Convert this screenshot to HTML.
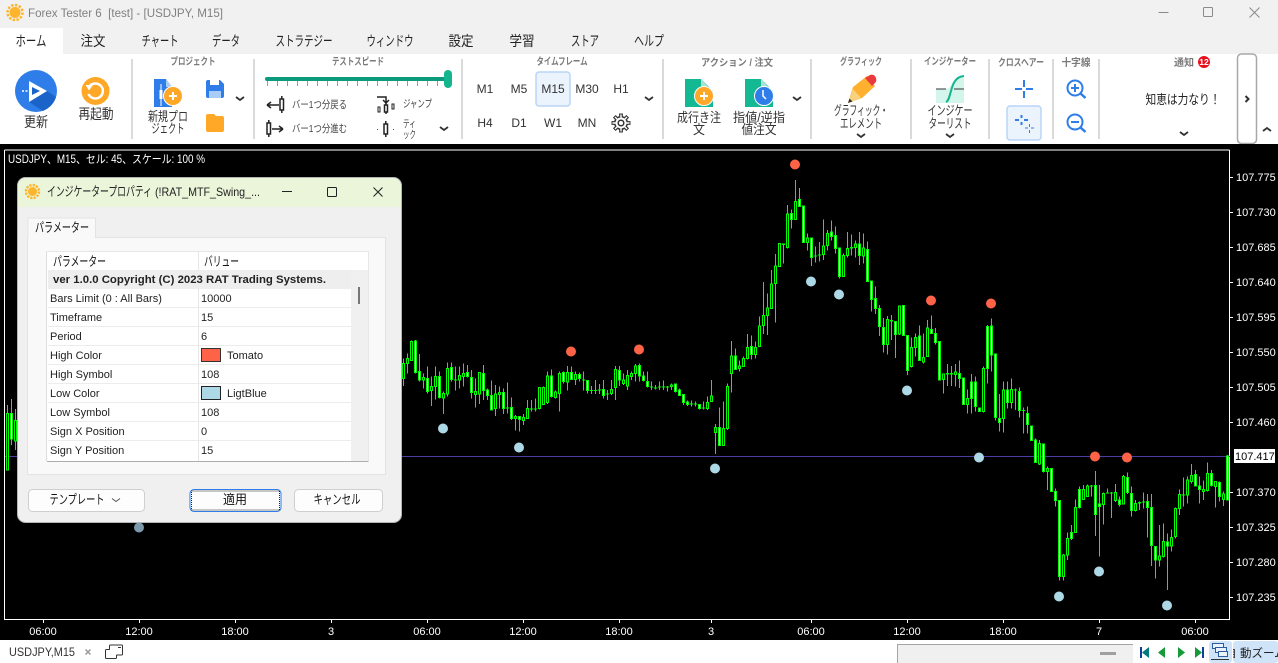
<!DOCTYPE html>
<html lang="ja"><head><meta charset="utf-8"><title>Forex Tester 6</title>
<style>
html,body{margin:0;padding:0;background:#fff;width:1278px;height:663px;overflow:hidden}
svg{display:block}
text{font-family:"Liberation Sans","Noto Sans CJK JP",sans-serif;font-size:12px;fill:#222}
.c{text-anchor:middle}
.tab{font-size:14px;text-anchor:middle;fill:#222}
.lbl{font-size:10px;text-anchor:middle;fill:#7a7a7a;font-weight:700}
.big{font-size:13px;text-anchor:middle;fill:#333}
.tf{font-size:12px;text-anchor:middle;fill:#333}
.sp{font-size:10.5px;fill:#444}
.px{font-size:11px;fill:#fff}
.tm{font-size:11px;fill:#fff;text-anchor:middle}
.r{font-size:11px;fill:#222}
.chev{fill:none;stroke:#333;stroke-width:1.8}
</style></head><body>
<svg width="1278" height="663" viewBox="0 0 1278 663" xmlns="http://www.w3.org/2000/svg">
<!-- title + tabs -->
<rect width="1278" height="54" fill="#f1f1f1"/>
<rect y="54" width="1278" height="90" fill="#fff"/>
<rect y="28" width="63" height="26" fill="#fff"/>
<g fill="#fdb52e"><circle cx="15" cy="12.500" r="5.500"/><circle cx="15" cy="12.500" r="7.500" fill="none" stroke="#fdb52e" stroke-width="2.500" stroke-dasharray="2.400 1.500"/></g>
<text x="28" y="17" style="font-size:12px;fill:#808080" xml:space="preserve" textLength="195" lengthAdjust="spacingAndGlyphs">Forex Tester 6  [test] - [USDJPY, M15]</text>
<path d="M1158.500 12.500h10" stroke="#8a8a8a" fill="none"/>
<rect x="1203.500" y="7.500" width="9" height="9" rx="1" fill="none" stroke="#8a8a8a"/>
<path d="M1249.500 7.500l10 10M1259.500 7.500l-10 10" stroke="#8a8a8a" fill="none"/>
<text class="tab" x="31" y="46" textLength="31" lengthAdjust="spacingAndGlyphs">ホーム</text><text class="tab" x="93" y="46" textLength="25" lengthAdjust="spacingAndGlyphs">注文</text><text class="tab" x="160" y="46" textLength="37" lengthAdjust="spacingAndGlyphs">チャート</text><text class="tab" x="226" y="46" textLength="28" lengthAdjust="spacingAndGlyphs">データ</text><text class="tab" x="304" y="46" textLength="57" lengthAdjust="spacingAndGlyphs">ストラテジー</text><text class="tab" x="390" y="46" textLength="47" lengthAdjust="spacingAndGlyphs">ウィンドウ</text><text class="tab" x="461" y="46" textLength="25" lengthAdjust="spacingAndGlyphs">設定</text><text class="tab" x="522" y="46" textLength="25" lengthAdjust="spacingAndGlyphs">学習</text><text class="tab" x="585" y="46" textLength="28" lengthAdjust="spacingAndGlyphs">ストア</text><text class="tab" x="649" y="46" textLength="30" lengthAdjust="spacingAndGlyphs">ヘルプ</text>
<!-- separators -->
<path d="M132 59v80M254 59v80M462 59v80M663 59v80M811 59v80M911 59v80M989 59v80M1053 59v80M1099 59v80" stroke="#dadada" stroke-width="2" fill="none"/>
<!-- group labels -->
<text class="lbl" x="193" y="65" textLength="45" lengthAdjust="spacingAndGlyphs">プロジェクト</text><text class="lbl" x="358" y="65" textLength="52" lengthAdjust="spacingAndGlyphs">テストスピード</text><text class="lbl" x="562" y="65" textLength="51" lengthAdjust="spacingAndGlyphs">タイムフレーム</text><text class="lbl" x="737" y="66" textLength="72" lengthAdjust="spacingAndGlyphs">アクション / 注文</text><text class="lbl" x="861" y="65" textLength="42" lengthAdjust="spacingAndGlyphs">グラフィック</text><text class="lbl" x="950" y="65" textLength="52" lengthAdjust="spacingAndGlyphs">インジケーター</text><text class="lbl" x="1021" y="66" textLength="46" lengthAdjust="spacingAndGlyphs">クロスヘアー</text><text class="lbl" x="1076" y="66" textLength="29" lengthAdjust="spacingAndGlyphs">十字線</text><text class="lbl" x="1184" y="66" textLength="20" lengthAdjust="spacingAndGlyphs">通知</text>
<circle cx="1204" cy="62" r="6" fill="#e8101c"/><text x="1204" y="65" class="c" style="font-size:8.500px;font-weight:700;fill:#fff">12</text>
<!-- update -->
<circle cx="36" cy="91" r="21" fill="#2f7de8"/>
<path d="M29 82L47 91L29 102L43 111Q53 106 56 97L47 91Z" fill="#1a64c9"/>
<path d="M29 81L47 91L29 102Z" fill="#fff"/>
<path d="M32 87L40 91L32 95Z" fill="#1a64c9"/>
<path d="M22 91h10" stroke="#fff" stroke-width="1.500" stroke-dasharray="2 1.500"/>
<text class="big" x="36" y="127" style="font-size:14px" textLength="24" lengthAdjust="spacingAndGlyphs">更新</text>
<!-- restart -->
<circle cx="95.500" cy="91" r="14" fill="#ffa726"/>
<path d="M89 87A7.500 7.500 0 1 1 88.500 94" fill="none" stroke="#fff" stroke-width="2.500"/>
<path d="M85.500 85h7.500l-4 5.500z" fill="#fff"/>
<text class="big" x="96" y="119" style="font-size:14px" textLength="35" lengthAdjust="spacingAndGlyphs">再起動</text>
<!-- new project -->
<path d="M154 79h12l6 8v20h-18z" fill="#2f7de8"/><path d="M166 79l6 8h-6z" fill="#a9cdf6"/>
<path d="M161 84v22" stroke="#fff"/><rect x="159.500" y="90" width="3" height="9" fill="#fff"/>
<circle cx="173" cy="96" r="9.500" fill="#ffa726" stroke="#fff"/><path d="M169 96h8M173 92v8" stroke="#fff" stroke-width="2"/>
<text class="big" x="168" y="121" textLength="40" lengthAdjust="spacingAndGlyphs">新規プロ</text><text class="big" x="168" y="133" textLength="33" lengthAdjust="spacingAndGlyphs">ジェクト</text>
<path d="M206 82a2 2 0 0 1 2-2h12l4 4v12a2 2 0 0 1-2 2h-14a2 2 0 0 1-2-2z" fill="#2f7de8"/>
<rect x="210" y="80" width="9" height="5" fill="#fff"/><rect x="209" y="91" width="12" height="7" fill="#a9cdf6"/>
<path d="M206 116a2 2 0 0 1 2-2h6l2 2h6a2 2 0 0 1 2 2v12a2 2 0 0 1-2 2h-14a2 2 0 0 1-2-2z" fill="#ffa726"/>
<path d="M236 97l4 3l4-3" class="chev"/>
<!-- slider -->
<g stroke="#999" fill="none"><path d="M267.500 81v5M277.500 81v5M287.500 81v5M297.500 81v5M307.500 81v5M317.500 81v5M327.500 81v5M337.500 81v5M347.500 81v5M357.500 81v5M367.500 81v5M377.500 81v5M387.500 81v5M397.500 81v5M407.500 81v5M417.500 81v5M427.500 81v5M437.500 81v5"/></g>
<rect x="265" y="77" width="182" height="4" rx="2" fill="#0b9a7c"/>
<rect x="444" y="70" width="8" height="18" rx="4" fill="#12b58d"/>
<!-- speed -->
<g fill="none" stroke="#222" stroke-width="1.500">
<path d="M267 105h12M267 105l4-3M267 105l4 3"/><rect x="280" y="99" width="3.500" height="11"/><path d="M281.800 96v3M281.800 110v3"/>
<rect x="267" y="123" width="3.500" height="11"/><path d="M268.800 120v3M268.800 134v3M272 129h11M283 129l-4-3M283 129l-4 3"/>
<rect x="384.500" y="105" width="3" height="7"/><path d="M386 102v3M386 112v2"/>
<rect x="378" y="107" width="2" height="5" stroke-width="1"/><rect x="392" y="104" width="2" height="5" stroke-width="1"/>
<path d="M377 97h9v5M383 100l3 3l3-3"/>
<rect x="384" y="124" width="3.500" height="10"/><path d="M385.800 121v3M385.800 134v3"/>
</g>
<rect x="377" y="129" width="1" height="1" fill="#555"/><rect x="393" y="129" width="1" height="1" fill="#555"/>
<text class="sp" x="292" y="108" textLength="55" lengthAdjust="spacingAndGlyphs">バー1つ分戻る</text><text class="sp" x="292" y="132" textLength="55" lengthAdjust="spacingAndGlyphs">バー1つ分進む</text><text class="sp" x="403" y="107" textLength="29" lengthAdjust="spacingAndGlyphs">ジャンプ</text><text class="sp" x="403" y="127" textLength="13" lengthAdjust="spacingAndGlyphs">ティ</text><text class="sp" x="403" y="138" textLength="13" lengthAdjust="spacingAndGlyphs">ック</text>
<path d="M440 127l4 3l4-3" class="chev"/>
<!-- timeframes -->
<rect x="536" y="72" width="34" height="34" rx="3" fill="#ebf3fd" stroke="#b9d5f6" stroke-width="1.500"/>
<text class="tf" x="485" y="93">M1</text><text class="tf" x="519" y="93">M5</text><text class="tf" x="553" y="93">M15</text><text class="tf" x="587" y="93">M30</text><text class="tf" x="621" y="93">H1</text><text class="tf" x="485" y="127">H4</text><text class="tf" x="519" y="127">D1</text><text class="tf" x="553" y="127">W1</text><text class="tf" x="587" y="127">MN</text>
<circle cx="621" cy="123" r="7" fill="#333"/>
<path d="M621 117v-3.500M621 129v3.500M615 123h-3.500M627 123h3.500M616.800 118.800l-2.500-2.500M625.200 127.200l2.500 2.500M625.200 118.800l2.500-2.500M616.800 127.200l-2.500 2.500" stroke="#333" stroke-width="3.800" fill="none"/>
<circle cx="621" cy="123" r="5.500" fill="#fff"/>
<path d="M621 118v-3.500M621 128v3.500M616 123h-3.500M626 123h3.500M617.500 119.500l-2.500-2.500M624.500 126.500l2.500 2.500M624.500 119.500l2.500-2.500M617.500 126.500l-2.500 2.500" stroke="#fff" stroke-width="1.400" fill="none"/>
<circle cx="621" cy="123" r="2.800" fill="#fff" stroke="#333" stroke-width="1.500"/>
<path d="M645 97l4 3l4-3" class="chev"/>
<!-- actions -->
<path d="M685 79h16l12 12v16h-28z" fill="#14b892"/><path d="M701 79l10 11h-10z" fill="#a6e3d3"/>
<circle cx="704" cy="96" r="9.500" fill="#ffa726" stroke="#fff"/><path d="M700 96h8M704 92v8" stroke="#fff" stroke-width="2"/>
<text class="big" x="699" y="122" textLength="44" lengthAdjust="spacingAndGlyphs">成行き注</text><text class="big" x="699" y="134" textLength="12" lengthAdjust="spacingAndGlyphs">文</text>
<path d="M745 79h16l12 12v16h-28z" fill="#14b892"/><path d="M761 79l10 11h-10z" fill="#a6e3d3"/>
<circle cx="764" cy="96" r="9.500" fill="#2f7de8" stroke="#fff"/><path d="M763 90v6l3 3" stroke="#fff" stroke-width="1.500" fill="none"/>
<text class="big" x="759" y="122" textLength="52" lengthAdjust="spacingAndGlyphs">指値/逆指</text><text class="big" x="759" y="134" textLength="35" lengthAdjust="spacingAndGlyphs">値注文</text>
<path d="M793 97l4 3l4-3" class="chev"/>
<!-- pencil -->
<path d="M848 103L853 87L867 76L875 86L862 98Z" fill="#ffb02e"/><path d="M865 78L870 75q3-1 5 1l1 2q1 3-1 5l-3 3Z" fill="#e93b3b"/><path d="M848 103L853 89L861 98Z" fill="#f7d27e"/><path d="M848 103l1.500-4.500l3 3z" fill="#333"/>
<text class="big" x="861" y="115" textLength="54" lengthAdjust="spacingAndGlyphs">グラフィック・</text><text class="big" x="861" y="128" textLength="42" lengthAdjust="spacingAndGlyphs">エレメント</text>
<path d="M857 134l4 3l4-3" class="chev"/>
<!-- indicator -->
<path d="M936 103V89h10c6 0 6-14 18-14v28z" fill="#d4f5ec"/>
<path d="M936 89h10M954 89h10" stroke="#333" fill="none"/>
<path d="M946 102c6-2 3-25 18-26" stroke="#12b58d" stroke-width="2" fill="none"/>
<text class="big" x="950" y="115" textLength="45" lengthAdjust="spacingAndGlyphs">インジケー</text><text class="big" x="950" y="128" textLength="43" lengthAdjust="spacingAndGlyphs">ターリスト</text>
<path d="M946 134l4 3l4-3" class="chev"/>
<!-- crosshair -->
<path d="M1015 89h7M1026 89h7M1024 80v7M1024 91v7" stroke="#2f7de8" stroke-width="2" fill="none"/>
<rect x="1007" y="106" width="34" height="34" rx="3" fill="#ebf3fd" stroke="#b9d5f6" stroke-width="1.500"/>
<path d="M1015 120h4M1024 120h4M1021.500 115v3M1021.500 122v3" stroke="#2f7de8" stroke-width="2" fill="none"/>
<path d="M1025 128h3M1031 128h3M1029.500 124v3M1029.500 130v3" stroke="#2f7de8" fill="none"/>
<!-- zoom -->
<g fill="none" stroke="#2f7de8" stroke-width="2"><circle cx="1075" cy="88" r="7.500"/><path d="M1071 88h8M1075 84v8"/><path d="M1080.500 93.500l5 4.500" stroke-width="2.500"/><circle cx="1075" cy="122" r="7.500"/><path d="M1071 122h8"/><path d="M1080.500 127.500l5 4.500" stroke-width="2.500"/></g>
<!-- note -->
<text class="c" x="1183" y="104" style="font-size:13px" textLength="75" lengthAdjust="spacingAndGlyphs">知恵は力なり！</text>
<path d="M1180 132l4 3l4-3" class="chev"/>
<rect x="1237.500" y="54" width="19" height="89.500" rx="4" fill="#fff" stroke="#a8a8a8" stroke-width="1.500"/>
<path d="M1245.500 96l3 3l-3 3" fill="none" stroke="#333" stroke-width="2"/>
<path d="M1263 131l4-3l4 3" class="chev"/>
<!-- chart -->
<rect y="144" width="1278" height="496" fill="#000"/>
<path d="M4.500 150V619.500H1229.500V150M4.500 150H1229.500" stroke="#fff" fill="none"/>
<path d="M43.500 619v4M139.500 619v4M235.500 619v4M331.500 619v4M427.500 619v4M523.500 619v4M619.500 619v4M711.500 619v4M811.500 619v4M907.500 619v4M1003.500 619v4M1099.500 619v4M1195.500 619v4" stroke="#fff"/>
<path d="M1229 177.500h4M1229 212.500h4M1229 247.500h4M1229 282.500h4M1229 317.500h4M1229 352.500h4M1229 387.500h4M1229 422.500h4M1229 492.500h4M1229 527.500h4M1229 562.500h4M1229 597.500h4" stroke="#fff"/>
<path d="M5 456.500H1230" stroke="#4b3fa6"/>
<g shape-rendering="crispEdges">
<!-- far-left candles -->
<path d="M7.500 405V470M11.500 399V445M15.500 409V450" stroke="#0f0"/>
<path d="M6.500 413.500h2V470h-2z M14.500 420.500h2V441h-2z" stroke="#0f0" fill="#000"/>
<path d="M10.500 413.500h2V439h-2z" stroke="#0f0" fill="#fff"/>
<g transform="translate(400,330) scale(.33333)">
<path stroke="#0f0" stroke-width="3" fill="none" d="M10.500 85V168M22.500 70V130M34.500 32V92M46.500 30V130M58.500 72V155M70.500 130V175M82.500 110V190M94.500 140V228M106.500 110V208M118.500 125V205M130.500 185V252M142.500 98V200M154.500 98V155M166.500 110V182M178.500 110V175M190.500 100V170M202.500 105V142M214.500 120V205M226.500 145V232M238.500 126V222M250.500 105V210M262.500 175V210M274.500 152V240M286.500 165V258M298.500 170V235M310.500 175V252M322.500 158V250M334.500 202V270M346.500 255V302M358.500 258V305M370.500 252V285M382.500 210V265M394.500 210V245M406.500 205V245M418.500 172V238M430.500 170V224M442.500 125V222M454.500 118V202M466.500 182V205M478.500 125V245M490.500 125V160M502.500 108V182M514.500 110V150M526.500 125V165M538.500 128V155M550.500 125V182M562.500 150V190M574.500 168V192M586.500 150V192M598.500 162V192M610.500 150V205M622.500 180V210M634.500 150V195M646.500 108V210M658.500 108V168M670.500 130V165M682.500 120V180M694.500 125V150M706.500 102V155M718.500 100V155M730.500 125V155M742.500 125V172M754.500 155V180M766.500 165V178M778.500 155V180M790.500 152V180M802.500 168V185M814.500 160V180M826.500 160V188M838.500 175V198M850.500 192V225M862.500 212V228M874.500 212V230M886.500 215V230M898.500 222V238M910.500 215V238M922.500 200V240M934.500 150V215M946.500 282V372M958.500 232V348M970.500 215V348M982.500 160V300"/>
<path stroke="#0f0" stroke-width="3" fill="#fff" d="M43.500 33h6V128h-6zM55.500 124h6V150h-6zM79.500 145h6V185h-6zM115.500 140h6V202h-6zM151.500 112h6V148h-6zM199.500 128h6V140h-6zM211.500 142h6V188h-6zM247.500 130h6V182h-6zM259.500 180h6V196h-6zM271.500 196h6V240h-6zM307.500 188h6V235h-6zM331.500 232h6V266h-6zM355.500 260h6V268h-6zM451.500 138h6V200h-6zM487.500 128h6V155h-6zM511.500 128h6V148h-6zM535.500 133h6V145h-6zM559.500 152h6V182h-6zM607.500 178h6V196h-6zM655.500 122h6V150h-6zM715.500 106h6V138h-6zM727.500 138h6V152h-6zM739.500 155h6V170h-6zM823.500 162h6V185h-6zM835.500 180h6V196h-6zM847.500 194h6V218h-6zM859.500 216h6V224h-6zM895.500 224h6V235h-6zM955.500 292h6V346h-6z"/>
<path stroke="#0f0" stroke-width="3" fill="#000" d="M7.500 100h6V146h-6zM19.500 85h6V100h-6zM31.500 35h6V92h-6zM67.500 142h6V150h-6zM91.500 170h6V182h-6zM103.500 140h6V170h-6zM127.500 190h6V204h-6zM139.500 115h6V192h-6zM175.500 136h6V150h-6zM187.500 130h6V140h-6zM223.500 184h6V194h-6zM235.500 128h6V192h-6zM283.500 192h6V236h-6zM295.500 188h6V194h-6zM343.500 260h6V266h-6zM367.500 262h6V272h-6zM379.500 235h6V265h-6zM415.500 172h6V236h-6zM427.500 172h6V224h-6zM439.500 138h6V218h-6zM463.500 186h6V202h-6zM475.500 130h6V190h-6zM499.500 128h6V156h-6zM523.500 133h6V148h-6zM631.500 178h6V190h-6zM643.500 118h6V172h-6zM667.500 150h6V160h-6zM679.500 136h6V168h-6zM691.500 130h6V140h-6zM703.500 108h6V130h-6zM811.500 165h6V170h-6zM919.500 218h6V236h-6zM931.500 198h6V214h-6zM943.500 292h6V308h-6zM967.500 295h6V346h-6zM979.500 170h6V295h-6z"/>
<path fill="#0f0" d="M162 148h9v3h-9zM318 232h9v3h-9zM390 235h9v3h-9zM402 235h9v3h-9zM546 148h9v3h-9zM570 180h9v3h-9zM582 180h9v3h-9zM594 179h9v3h-9zM618 190h9v3h-9zM750 170h9v3h-9zM762 172h9v3h-9zM774 170h9v3h-9zM786 169h9v3h-9zM798 169h9v3h-9zM870 221h9v3h-9zM882 221h9v3h-9zM906 233h9v3h-9z"/>
</g>
<g transform="translate(700,150) scale(.33333)">
<path stroke="#0f0" stroke-width="3" fill="none" d="M94.500 573V728M106.500 595V660M118.500 632V665M130.500 620V650M142.500 552V628M154.500 556V628M166.500 575V625M178.500 500V590M190.500 396V552M202.500 430V555M214.500 360V476M226.500 312V518M238.500 280V350M250.500 280V340M262.500 165V296M274.500 178V236M286.500 90V208M298.500 114V170M310.500 168V278M322.500 250V302M334.500 264V348M346.500 290V338M358.500 276V335M370.500 208V330M382.500 240V302M394.500 212V272M406.500 230V310M418.500 292V385M430.500 310V380M442.500 246V322M454.500 254V316M466.500 272V322M478.500 246V345M490.500 250V340M502.500 274V395M514.500 392V485M526.500 410V492M538.500 465V558M550.500 504V608M562.500 498V614M574.500 495V570M586.500 514V624M598.500 468V555M610.500 466V558M622.500 556V675M634.500 562V652M646.500 550V620M658.500 526V632M670.500 550V640M682.500 510V620M694.500 496V552M706.500 534V584M718.500 574V690M730.500 672V730M742.500 642V708M754.500 648V708M766.500 642V710M778.500 632V714M790.500 682V764M802.500 718V790M814.500 672V790M826.500 680V785"/>
<path stroke="#0f0" stroke-width="3" fill="#fff" d="M103.500 618h6V658h-6zM151.500 590h6V614h-6zM271.500 190h6V208h-6zM295.500 148h6V170h-6zM307.500 168h6V278h-6zM331.500 264h6V322h-6zM391.500 246h6V260h-6zM403.500 256h6V296h-6zM415.500 294h6V380h-6zM475.500 282h6V316h-6zM499.500 298h6V394h-6zM511.500 393h6V448h-6zM523.500 445h6V476h-6zM535.500 475h6V530h-6zM547.500 532h6V584h-6zM583.500 514h6V554h-6zM607.500 466h6V556h-6zM619.500 556h6V662h-6zM655.500 558h6V632h-6zM691.500 538h6V550h-6zM703.500 550h6V578h-6zM715.500 574h6V690h-6zM775.500 670h6V686h-6zM787.500 684h6V764h-6zM811.500 696h6V745h-6zM823.500 696h6V770h-6z"/>
<path stroke="#0f0" stroke-width="3" fill="#000" d="M91.500 618h6V670h-6zM115.500 648h6V656h-6zM127.500 625h6V650h-6zM139.500 592h6V626h-6zM163.500 592h6V614h-6zM175.500 528h6V590h-6zM187.500 496h6V526h-6zM199.500 474h6V496h-6zM211.500 402h6V476h-6zM223.500 348h6V400h-6zM235.500 280h6V350h-6zM259.500 192h6V292h-6zM283.500 154h6V208h-6zM319.500 264h6V278h-6zM367.500 288h6V314h-6zM379.500 250h6V286h-6zM427.500 316h6V380h-6zM439.500 295h6V316h-6zM463.500 282h6V292h-6zM487.500 294h6V318h-6zM559.500 508h6V584h-6zM595.500 468h6V552h-6zM631.500 592h6V650h-6zM643.500 562h6V592h-6zM667.500 622h6V636h-6zM679.500 534h6V620h-6zM727.500 672h6V688h-6zM763.500 666h6V674h-6zM799.500 745h6V764h-6z"/>
<path fill="#0f0" d="M246 281h9v4h-9zM342 316h9v4h-9zM354 313h9v4h-9zM450 291h9v4h-9zM570 510h9v4h-9zM738 669h9v4h-9zM750 669h9v4h-9z"/>
</g>
<g transform="translate(980,300) scale(.33333)">
<path stroke="#0f0" stroke-width="3" fill="none" d="M10.500 200V338M22.500 75V250M34.500 55V215M46.500 162V362M58.500 282V395M70.500 245V398M82.500 245V325M94.500 235V325M106.500 265V330M118.500 262V352M130.500 322V400M142.500 320V400M154.500 378V420M166.500 415V488M178.500 420V495M190.500 430V518M202.500 500V570M214.500 505V575M226.500 565V620M238.500 600V842M250.500 762V842M262.500 697V780M274.500 675V720M286.500 598V698M298.500 560V625M310.500 555V600M322.500 553V590M334.500 555V590M346.500 513V708M358.500 555V770M370.500 578V674M382.500 565V580M394.500 576V654M406.500 552V606M418.500 590V620M430.500 525V612M442.500 517V582M454.500 560V650M466.500 600V635M478.500 605V630M490.500 578V625M502.500 582V712M514.500 582V798M526.500 738V835M538.500 675V800M550.500 670V772M562.500 700V870M574.500 688V755M586.500 622V715M598.500 568V645M610.500 533V620M622.500 530V610M634.500 492V550M646.500 510V560M658.500 530V610M670.500 542V600M682.500 487V575M694.500 510V560M706.500 545V622M718.500 545V605M730.500 575V618M742.500 465V600"/>
<path stroke="#0f0" stroke-width="3" fill="#fff" d="M-4.500 324h6V335h-6zM19.500 80h6V205h-6zM31.500 78h6V165h-6zM43.500 162h6V352h-6zM55.500 355h6V368h-6zM79.500 270h6V308h-6zM115.500 275h6V332h-6zM139.500 340h6V373h-6zM151.500 378h6V422h-6zM163.500 420h6V488h-6zM187.500 432h6V515h-6zM211.500 505h6V575h-6zM223.500 575h6V602h-6zM235.500 602h6V830h-6zM271.500 697h6V716h-6zM295.500 568h6V622h-6zM343.500 556h6V644h-6zM355.500 612h6V620h-6zM415.500 600h6V614h-6zM439.500 532h6V578h-6zM451.500 580h6V632h-6zM499.500 604h6V622h-6zM511.500 622h6V736h-6zM523.500 740h6V780h-6zM559.500 726h6V738h-6zM643.500 524h6V558h-6zM655.500 558h6V568h-6zM691.500 520h6V556h-6zM715.500 547h6V590h-6zM739.500 468h6V600h-6z"/>
<path stroke="#0f0" stroke-width="3" fill="#000" d="M7.500 205h6V335h-6zM67.500 270h6V355h-6zM91.500 268h6V308h-6zM175.500 430h6V492h-6zM199.500 505h6V515h-6zM247.500 765h6V830h-6zM259.500 715h6V765h-6zM283.500 622h6V698h-6zM307.500 568h6V598h-6zM319.500 558h6V590h-6zM367.500 580h6V614h-6zM403.500 578h6V602h-6zM427.500 530h6V612h-6zM463.500 610h6V632h-6zM535.500 768h6V780h-6zM547.500 725h6V770h-6zM571.500 712h6V738h-6zM583.500 625h6V710h-6zM595.500 584h6V625h-6zM619.500 540h6V585h-6zM631.500 526h6V544h-6zM667.500 568h6V575h-6zM679.500 520h6V572h-6zM703.500 545h6V560h-6zM727.500 582h6V598h-6z"/>
<path fill="#0f0" d="M102 268h9v4h-9zM126 330h9v3h-9zM330 556h9v4h-9zM378 578h9v3h-9zM390 577h9v3h-9zM474 606h9v4h-9zM486 604h9v4h-9zM606 583h9v3h-9z"/>
</g>
</g>
<!-- markers -->
<g fill="#ff6347"><circle cx="795" cy="164.500" r="5"/><circle cx="571" cy="351.500" r="5"/><circle cx="639" cy="349.500" r="5"/><circle cx="931" cy="300.500" r="5"/><circle cx="991" cy="303.500" r="5"/><circle cx="1095" cy="456.500" r="5"/><circle cx="1127" cy="457.500" r="5"/></g>
<g fill="#add8e6"><circle cx="811" cy="281.500" r="5"/><circle cx="839" cy="294.500" r="5"/><circle cx="907" cy="390.500" r="5"/><circle cx="443" cy="428.500" r="5"/><circle cx="519" cy="447.500" r="5"/><circle cx="715" cy="468.500" r="5"/><circle cx="979" cy="457.500" r="5"/><circle cx="1059" cy="596.500" r="5"/><circle cx="1099" cy="571.500" r="5"/><circle cx="1167" cy="605.500" r="5"/></g>
<circle cx="139" cy="527.500" r="5" fill="#7c9aaa"/>
<!-- axes -->
<text class="px" x="1236" y="181">107.775</text><text class="px" x="1236" y="216">107.730</text><text class="px" x="1236" y="251">107.685</text><text class="px" x="1236" y="286">107.640</text><text class="px" x="1236" y="321">107.595</text><text class="px" x="1236" y="356">107.550</text><text class="px" x="1236" y="391">107.505</text><text class="px" x="1236" y="426">107.460</text><text class="px" x="1236" y="496">107.370</text><text class="px" x="1236" y="531">107.325</text><text class="px" x="1236" y="566">107.280</text><text class="px" x="1236" y="601">107.235</text>
<rect x="1234" y="449" width="41" height="14" fill="#fff"/><text class="px" x="1235" y="460" style="fill:#000">107.417</text>
<text class="tm" x="43" y="635">06:00</text><text class="tm" x="139" y="635">12:00</text><text class="tm" x="235" y="635">18:00</text><text class="tm" x="331" y="635">3</text><text class="tm" x="427" y="635">06:00</text><text class="tm" x="523" y="635">12:00</text><text class="tm" x="619" y="635">18:00</text><text class="tm" x="711" y="635">3</text><text class="tm" x="811" y="635">06:00</text><text class="tm" x="907" y="635">12:00</text><text class="tm" x="1003" y="635">18:00</text><text class="tm" x="1099" y="635">7</text><text class="tm" x="1195" y="635">06:00</text>
<text x="8" y="163" style="font-size:11.500px;fill:#fff" textLength="197" lengthAdjust="spacingAndGlyphs">USDJPY、M15、セル: 45、スケール: 100 %</text>
<!-- dialog -->
<rect x="17.500" y="177.500" width="384" height="345" rx="8" fill="#f0f0f0" stroke="#b5b5b5"/>
<path d="M18 207V185.500a7.500 7.500 0 0 1 7.500-7.500H393.500a7.500 7.500 0 0 1 7.500 7.500V207z" fill="#eaf5d9"/>
<circle cx="32.500" cy="191.500" r="4.500" fill="#fdb52e"/><circle cx="32.500" cy="191.500" r="6.500" fill="none" stroke="#fdb52e" stroke-width="2.500" stroke-dasharray="2.200 1.200"/>
<text x="47" y="196" style="font-size:13px;fill:#222" textLength="105" lengthAdjust="spacingAndGlyphs">インジケータープロパティ</text>
<text x="155" y="196" style="font-size:12px;fill:#222" textLength="105" lengthAdjust="spacingAndGlyphs">(!RAT_MTF_Swing_...</text>
<path d="M282 191.500h10" stroke="#222"/><rect x="327.500" y="187.500" width="9" height="9" rx="1" fill="none" stroke="#222"/><path d="M373.500 187.500l9 9M382.500 187.500l-9 9" stroke="#222" fill="none"/>
<rect x="27.500" y="237.500" width="358" height="237" fill="#f9f9f9" stroke="#e3e3e3"/>
<path d="M28 238V218h67.500v20" fill="#f9f9f9" stroke="#e3e3e3"/>
<text x="35" y="232" style="font-size:13px;fill:#111" textLength="54" lengthAdjust="spacingAndGlyphs">パラメーター</text>
<!-- grid -->
<rect x="47" y="252" width="321" height="209" fill="#fff"/>
<rect x="351" y="270" width="17" height="191" fill="#f0f0f0"/>
<rect x="48" y="270" width="303" height="19" fill="#eeeeee"/>
<path d="M46.500 251.500H368.500V270M198.500 252v18M198.500 289v172" stroke="#e6e6e6" fill="none"/>
<path d="M48 307.500h303M48 326.500h303M48 345.500h303M48 364.500h303M48 383.500h303M48 402.500h303M48 421.500h303M48 440.500h303" stroke="#ececec"/>
<path d="M47 461.500H368.500" stroke="#9a9a9a" fill="none" stroke-opacity=".8"/><path d="M368.500 270V461" stroke="#e6e6e6"/><path d="M46.500 252V461" stroke="#dcdcdc"/>
<rect x="358" y="287" width="2" height="17" fill="#777"/>
<text x="53" y="266" style="font-size:13px;fill:#111" textLength="53" lengthAdjust="spacingAndGlyphs">パラメーター</text><text x="204" y="266" style="font-size:13px;fill:#111" textLength="35" lengthAdjust="spacingAndGlyphs">バリュー</text>
<text x="53" y="283" style="font-size:11px;font-weight:700;fill:#222" textLength="273" lengthAdjust="spacingAndGlyphs">ver 1.0.0 Copyright (C) 2023 RAT Trading Systems.</text>
<text class="r" x="50" y="302">Bars Limit (0 : All Bars)</text><text class="r" x="201" y="302">10000</text>
<text class="r" x="50" y="321">Timeframe</text><text class="r" x="201" y="321">15</text>
<text class="r" x="50" y="340">Period</text><text class="r" x="201" y="340">6</text>
<text class="r" x="50" y="359">High Color</text><rect x="201.500" y="348.500" width="19" height="13" fill="#ff6347" stroke="#333"/><text class="r" x="227" y="359">Tomato</text>
<text class="r" x="50" y="378">High Symbol</text><text class="r" x="201" y="378">108</text>
<text class="r" x="50" y="397">Low Color</text><rect x="201.500" y="386.500" width="19" height="13" fill="#add8e6" stroke="#222"/><text class="r" x="227" y="397">LigtBlue</text>
<text class="r" x="50" y="416">Low Symbol</text><text class="r" x="201" y="416">108</text>
<text class="r" x="50" y="435">Sign X Position</text><text class="r" x="201" y="435">0</text>
<text class="r" x="50" y="454">Sign Y Position</text><text class="r" x="201" y="454">15</text>
<!-- buttons -->
<rect x="28.500" y="489.500" width="116" height="22" rx="4" fill="#fdfdfd" stroke="#cfcfcf"/>
<text class="c" x="77" y="504" style="font-size:13px;fill:#111" textLength="55" lengthAdjust="spacingAndGlyphs">テンプレート</text><path d="M112 498.500l4 3l4-3" fill="none" stroke="#555"/>
<rect x="190" y="489.500" width="91" height="22" rx="4" fill="#fdfdfd" stroke="#2f7de8"/><rect x="191.500" y="491" width="88" height="19" fill="none" stroke="#222" stroke-dasharray="1 1"/>
<text class="c" x="235" y="504" style="font-size:13px;fill:#111" textLength="24" lengthAdjust="spacingAndGlyphs">適用</text>
<rect x="294.500" y="489.500" width="88" height="22" rx="4" fill="#fdfdfd" stroke="#cfcfcf"/>
<text class="c" x="337" y="504" style="font-size:13px;fill:#111" textLength="47" lengthAdjust="spacingAndGlyphs">キャンセル</text>
<!-- bottom bar -->
<rect y="640" width="1278" height="23" fill="#fff"/>
<text x="9" y="656" style="font-size:12px;fill:#333" textLength="66" lengthAdjust="spacingAndGlyphs">USDJPY,M15</text>
<path d="M85.500 649.500l5 5M90.500 649.500l-5 5" stroke="#999" stroke-width="1.500"/>
<rect x="105.500" y="649.500" width="11" height="9" fill="#fff" stroke="#333" rx="1"/><path d="M109.500 649.500v-3.500a1 1 0 0 1 1-1h11a1 1 0 0 1 1 1v8a1 1 0 0 1-1 1h-5" fill="#fff" stroke="#333"/><path d="M118 647.500h3" stroke="#333"/>
<rect x="897" y="644" width="236" height="19" fill="#f0f0f0"/><path d="M897.500 663V644.500H1133" stroke="#a5a5a5" fill="none"/>
<rect x="1100" y="652" width="16" height="3" fill="#a0a0a0"/>
<rect x="1140" y="647" width="2" height="11" fill="#0d3f9c"/><path d="M1149 647v11l-7-5.500z" fill="#007a7a"/>
<path d="M1165 647v11l-7-5.500z" fill="#159a3a"/><path d="M1178 647v11l7-5.500z" fill="#159a3a"/>
<path d="M1195 647v11l7-5.500z" fill="#159a3a"/><rect x="1202" y="647" width="2" height="11" fill="#0d3f9c"/>
<rect x="1209" y="641" width="23" height="22" rx="3" fill="#cfe4f9"/>
<g fill="#eaf3fc" stroke="#2b5d9e"><rect x="1212.500" y="643.500" width="11" height="5"/><rect x="1215.500" y="647.500" width="11" height="5"/><rect x="1218.500" y="651.500" width="9" height="5"/></g>
<path d="M1211 659.500h18" stroke="#333"/>
<svg x="1233" y="641" width="45" height="22"><rect width="45" height="22" rx="3" fill="#cfe4f9"/><text x="-8" y="16" style="font-size:11.500px;fill:#222">自</text><text x="7" y="16" style="font-size:11.500px;fill:#222">動ズーム</text></svg>
</svg>
</body></html>
